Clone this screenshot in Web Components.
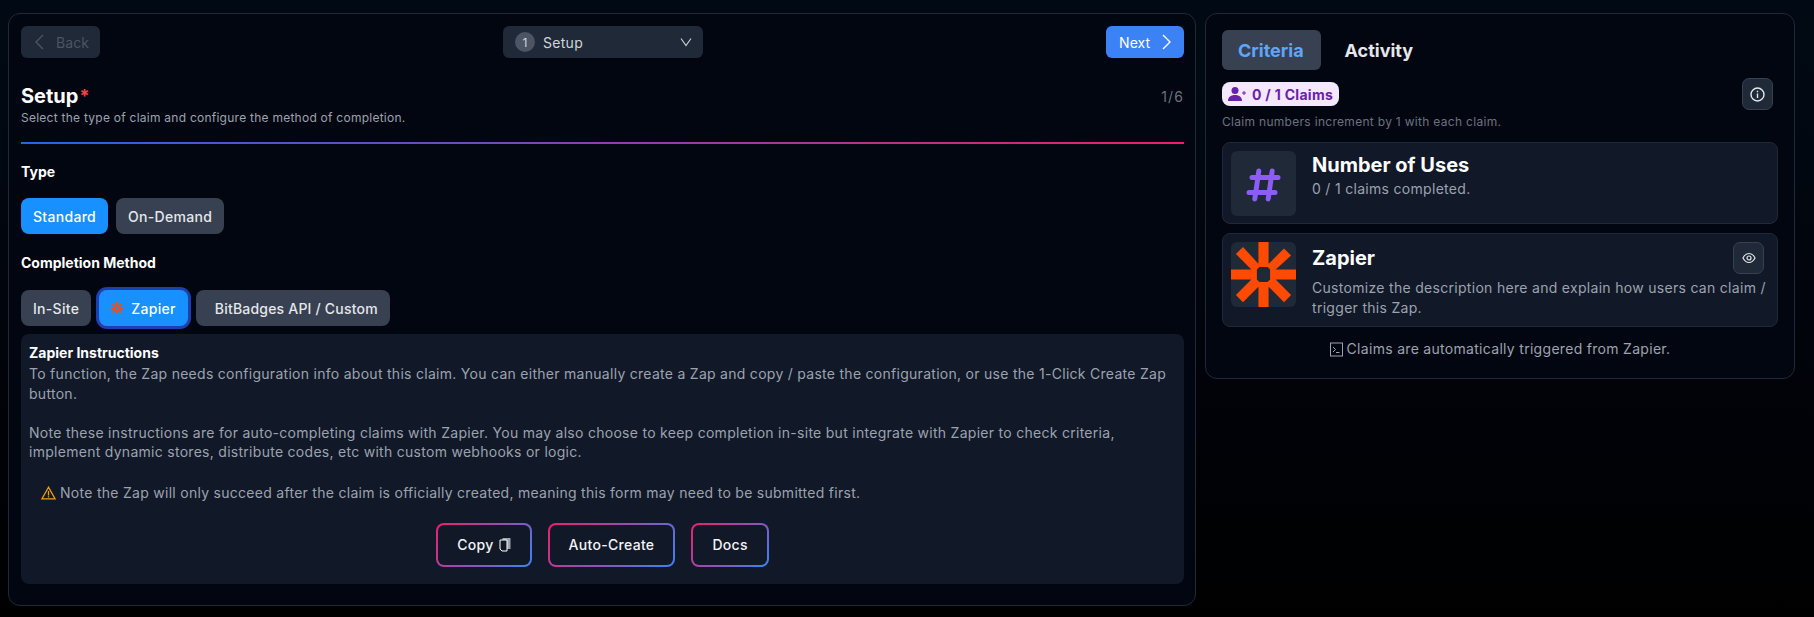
<!DOCTYPE html>
<html>
<head>
<meta charset="utf-8">
<title>Claim setup</title>
<style>
  html, body { margin: 0; height: 100%; }
  body {
    background: linear-gradient(180deg, #010a14 0%, #01040c 50%, #000000 100%);
    font-family: Inter, "Liberation Sans", sans-serif;
    color: #fff;
    overflow: hidden;
  }
</style>
</head>
<body>
<claim-page>
  <setup-panel></setup-panel>
  <criteria-panel></criteria-panel>
</claim-page>

<script>
const ICONS = {
  left: '<svg width="12" height="18" viewBox="0 0 12 18" fill="none" stroke="currentColor" stroke-width="1.4"><path d="M10 2 3 9l7 7"/></svg>',
  right: '<svg width="12" height="18" viewBox="0 0 12 18" fill="none" stroke="currentColor" stroke-width="1.4"><path d="M2 2l7 7-7 7"/></svg>',
  down: '<svg width="12" height="10" viewBox="0 0 12 10" fill="none" stroke="currentColor" stroke-width="1.1"><path d="M1 1.5l5 7 5-7"/></svg>',
  zapier: '<svg style="display:block" viewBox="0 0 64 64" width="100%" height="100%" fill="#ff4a00"><path fill-rule="evenodd" d="M27 0h10v21.500l15.200-15.200 7 7L44 27h20v10H44l15.200 15.200-7 7L37 44v20H27V44L11.800 59.200l-7-7L20 37H0V27h20L4.800 11.800l7-7L27 21.500zM25.500 27v10l2.500 2.500h8l2.500-2.500V27L36 24.500h-8z"/></svg>'
};

class ClaimPage extends HTMLElement {
  constructor() {
    super();
    this.attachShadow({ mode: 'open' });
    this.shadowRoot.innerHTML = `
      <style>
        :host {
          display: grid;
          grid-template-columns: 1188px 590px;
          gap: 9px;
          align-items: start;
          padding: 13px 0 0 8px;
        }
      </style>
      <slot></slot>`;
  }
}

class PillButton extends HTMLElement {
  constructor() {
    super();
    this.attachShadow({ mode: 'open' });
    this.shadowRoot.innerHTML = `
      <style>
        :host {
          display: inline-flex;
          align-items: center;
          justify-content: center;
          box-sizing: border-box;
          height: 36px;
          padding: 0 12px;
          border-radius: 8px;
          background: #374151;
          color: #e5e7eb;
          font-size: 14px;
          font-weight: 500;
          letter-spacing: .3px;
          white-space: nowrap;
        }
        :host([active]) { background: #1890ff; color: #fff; }
        :host([ring]) { box-shadow: 0 0 0 3px #1e40af; }
      </style>
      <slot></slot>`;
  }
}

class GradientButton extends HTMLElement {
  constructor() {
    super();
    this.attachShadow({ mode: 'open' });
    this.shadowRoot.innerHTML = `
      <style>
        :host {
          display: inline-flex;
          align-items: center;
          justify-content: center;
          gap: 5px;
          box-sizing: border-box;
          height: 44px;
          padding: 0 19px;
          border: 2px solid transparent;
          border-radius: 8px;
          background: linear-gradient(#111827, #111827) padding-box,
            linear-gradient(135deg, #ec1f6c 0%, #3b82f6 100%) border-box;
          color: #f3f4f6;
          font-size: 14px;
          font-weight: 500;
          letter-spacing: .3px;
        }
      </style>
      <slot></slot>`;
  }
}

class SetupPanel extends HTMLElement {
  constructor() {
    super();
    this.attachShadow({ mode: 'open' });
    this.shadowRoot.innerHTML = `
      <style>
        :host {
          display: block;
          box-sizing: border-box;
          height: 593px;
          padding: 12px 11px 0 12px;
          border: 1px solid #1f2937;
          border-radius: 12px;
          background: #020611;
        }
        .nav {
          display: flex;
          justify-content: space-between;
          align-items: center;
          height: 32px;
          font-size: 14px;
          letter-spacing: .3px;
        }
        .nav-btn {
          display: flex;
          align-items: center;
          box-sizing: border-box;
          height: 32px;
          border-radius: 6px;
        }
        .back { width: 79px; padding-left: 12px; gap: 11px; background: #1f2937; color: #4b5563; letter-spacing: .1px; }
        .next { width: 78px; padding-left: 13px; gap: 11px; background: #3b82f6; color: #fff; letter-spacing: .1px; }
        .step {
          width: 200px;
          padding: 0 12px;
          gap: 8px;
          background: #1f2937;
          color: #d1d5db;
        }
        .num {
          width: 20px;
          height: 20px;
          border-radius: 50%;
          background: #4b5563;
          display: flex;
          align-items: center;
          justify-content: center;
          font-size: 12px;
        }
        .step svg { margin-left: auto; margin-right: -1px; }
        .head {
          display: flex;
          justify-content: space-between;
          margin-top: 25px;
          height: 26px;
          align-items: center;
        }
        h2 { margin: 0; font-size: 20px; font-weight: 700; line-height: 26px; }
        h2 span { color: #ef4444; font-size: 18px; margin-left: 1px; vertical-align: 1px; }
        .count { font-size: 14px; letter-spacing: 1.1px; color: #6b7280; }
        .sub { margin: 0; font-size: 12px; line-height: 18px; letter-spacing: .25px; color: #9ca3af; }
        .rule {
          height: 2px;
          margin-top: 15px;
          background: linear-gradient(90deg, #2563eb, #ec1f6c);
        }
        .label { margin: 19px 0 0; font-size: 14px; line-height: 18px; font-weight: 700; }
        .row { display: flex; gap: 8px; margin-top: 17px; }
        .label.second { margin-top: 20px; }
        .row.second { margin-top: 18px; }
        .row .wide { padding-left: 19px; letter-spacing: .2px; }
        .zap { display: block; width: 12px; height: 12px; margin-right: 8px; }
        .inst {
          margin-top: 8px;
          height: 250px;
          box-sizing: border-box;
          padding: 9px 8px;
          border-radius: 8px;
          background: #111827;
        }
        .inst h3 { margin: 0 0 1px; font-size: 14px; line-height: 20px; font-weight: 700; }
        .inst p {
          margin: 0;
          font-size: 14px;
          line-height: 19.6px;
          letter-spacing: .28px;
          color: #9ca3af;
        }
        .note {
          display: flex;
          align-items: center;
          gap: 4px;
          margin: 21px 0 0 12px;
          font-size: 14px;
          line-height: 20px;
          letter-spacing: .28px;
          color: #9ca3af;
        }
        .actions { display: flex; justify-content: center; gap: 16px; margin-top: 20px; }
      </style>
      <div class="nav">
        <div class="nav-btn back">${ICONS.left}<span>Back</span></div>
        <div class="nav-btn step"><span class="num">1</span><span>Setup</span>${ICONS.down}</div>
        <div class="nav-btn next"><span>Next</span>${ICONS.right}</div>
      </div>
      <div class="head"><h2>Setup<span>*</span></h2><span class="count">1/6</span></div>
      <p class="sub">Select the type of claim and configure the method of completion.</p>
      <div class="rule"></div>
      <div class="label">Type</div>
      <div class="row">
        <pill-button active>Standard</pill-button>
        <pill-button>On-Demand</pill-button>
      </div>
      <div class="label second">Completion Method</div>
      <div class="row second">
        <pill-button>In-Site</pill-button>
        <pill-button active ring><span class="zap">${ICONS.zapier}</span>Zapier</pill-button>
        <pill-button class="wide">BitBadges API / Custom</pill-button>
      </div>
      <div class="inst">
        <h3>Zapier Instructions</h3>
        <p>To function, the Zap needs configuration info about this claim. You can either manually create a Zap and copy / paste the configuration, or use the 1-Click Create Zap button.</p>
        <p><br>Note these instructions are for auto-completing claims with Zapier. You may also choose to keep completion in-site but integrate with Zapier to check criteria, implement dynamic stores, distribute codes, etc with custom webhooks or logic.</p>
        <div class="note">
          <svg width="15" height="14" viewBox="0 0 15 14" fill="none" stroke="#f59e0b" stroke-width="1.3"><path d="M7.500 1.200 1 12.800h13zM7.500 5v4.500M7.500 10.300v1.200"/></svg>
          <span>Note the Zap will only succeed after the claim is officially created, meaning this form may need to be submitted first.</span>
        </div>
        <div class="actions">
          <gradient-button>Copy <svg width="12" height="15" viewBox="0 0 12 15"><path d="M3.500 1h8v11h-8z" fill="#9ca3af"/><path d="M1 3h7v11H3l-2-2z" stroke="#fff" fill="#111827"/></svg></gradient-button>
          <gradient-button>Auto-Create</gradient-button>
          <gradient-button>Docs</gradient-button>
        </div>
      </div>`;
  }
}

class CriterionCard extends HTMLElement {
  constructor() {
    super();
    this.attachShadow({ mode: 'open' });
    this.shadowRoot.innerHTML = `
      <style>
        :host {
          display: flex;
          gap: 16px;
          box-sizing: border-box;
          padding: 8px;
          border: 1px solid #1f2937;
          border-radius: 8px;
          background: #111827;
        }
        .icon {
          flex: none;
          width: 65px;
          height: 65px;
          border-radius: 6px;
          background: #1f2937;
          display: flex;
          align-items: center;
          justify-content: center;
        }
        .body { flex: 1; min-width: 0; }
        .head { display: flex; align-items: center; justify-content: space-between; }
        .title { font-size: 20px; line-height: 28px; font-weight: 700; }
        .desc {
          margin-top: var(--desc-gap, 0);
          font-size: 14px;
          line-height: 20px;
          letter-spacing: .3px;
          color: #9ca3af;
        }
      </style>
      <div class="icon"><slot name="icon"></slot></div>
      <div class="body">
        <div class="head">
          <div class="title"><slot name="title"></slot></div>
          <slot name="action"></slot>
        </div>
        <div class="desc"><slot></slot></div>
      </div>`;
  }
}

class IconButton extends HTMLElement {
  constructor() {
    super();
    this.attachShadow({ mode: 'open' });
    this.shadowRoot.innerHTML = `
      <style>
        :host {
          flex: none;
          display: flex;
          align-items: center;
          justify-content: center;
          box-sizing: border-box;
          width: 31px;
          height: 32px;
          border: 1px solid #374151;
          border-radius: 7px;
          background: #1f2937;
          color: #e5e7eb;
        }
      </style>
      <slot></slot>`;
  }
}

class CriteriaPanel extends HTMLElement {
  constructor() {
    super();
    this.attachShadow({ mode: 'open' });
    this.shadowRoot.innerHTML = `
      <style>
        :host {
          display: block;
          box-sizing: border-box;
          height: 366px;
          padding: 16px 16px 0;
          border: 1px solid #1f2937;
          border-radius: 12px;
          background: #020611;
        }
        .tabs { display: flex; gap: 24px; font-size: 18px; font-weight: 700; align-items: center; }
        .tab { padding: 0 17px 0 16px; height: 40px; display: flex; align-items: center; border-radius: 6px; }
        .tab.on { background: #374151; color: #60a5fa; }
        .tab.off { padding: 0; color: #e5e7eb; }
        .top {
          display: flex;
          justify-content: space-between;
          align-items: center;
          margin-top: 8px;
          padding-right: 5px;
        }
        .chip {
          display: flex;
          align-items: center;
          gap: 6px;
          height: 24px;
          padding: 0 6px;
          border-radius: 8px;
          background: #f3e8ff;
          color: #6b21a8;
          font-size: 14px;
          font-weight: 700;
          letter-spacing: .3px;
        }
        .hint { margin: 3px 0 0; font-size: 12px; line-height: 18px; letter-spacing: .3px; color: #6b7280; }
        .cards { display: flex; flex-direction: column; gap: 9px; margin-top: 11px; }
        criterion-card:first-child { height: 82px; }
        criterion-card:last-child { height: 94px; --desc-gap: 4px; }
        .foot {
          display: flex;
          align-items: center;
          justify-content: center;
          gap: 4px;
          margin-top: 12px;
          font-size: 14px;
          line-height: 20px;
          letter-spacing: .3px;
          color: #9ca3af;
        }
      </style>
      <div class="tabs"><div class="tab on">Criteria</div><div class="tab off">Activity</div></div>
      <div class="top">
        <div class="chip">
          <svg width="18" height="14" viewBox="0 0 18 14" fill="#6b21a8"><circle cx="7" cy="3.500" r="3.500"/><path d="M0 14c0-4 3-6 7-6s7 2 7 6zM14 5.500h1.500V4h1v1.500H18v1h-1.500V8h-1V6.500H14z"/></svg>
          <span>0 / 1 Claims</span>
        </div>
        <icon-button>
          <svg width="15" height="15" viewBox="0 0 15 15" fill="none" stroke="currentColor" stroke-width="1.4"><circle cx="7.500" cy="7.500" r="6.500"/><path d="M7.500 6.500v4.500M7.500 3.800v1.400"/></svg>
        </icon-button>
      </div>
      <p class="hint">Claim numbers increment by 1 with each claim.</p>
      <div class="cards">
        <criterion-card>
          <svg slot="icon" width="38" height="38" viewBox="0 0 38 38" fill="none" stroke="#8b5cf6" stroke-width="5" stroke-linecap="round"><path d="M13.800 6 9.800 34M27.200 6 23.200 34M7 12.500h26M4 27.500h26"/></svg>
          <span slot="title">Number of Uses</span>
          0 / 1 claims completed.
        </criterion-card>
        <criterion-card>
          <span slot="icon" style="width:65px;height:65px">${ICONS.zapier}</span>
          <span slot="title">Zapier</span>
          Customize the description here and explain how users can claim / trigger this Zap.
          <icon-button slot="action" style="margin-right:5px">
            <svg width="14" height="12" viewBox="0 0 14 12" fill="none" stroke="currentColor" stroke-width="1.200"><path d="M1 6c1.500-3 3.500-4.500 6-4.500S11.500 3 13 6c-1.500 3-3.500 4.500-6 4.500S2.500 9 1 6z"/><circle cx="7" cy="6" r="2"/></svg>
          </icon-button>
        </criterion-card>
      </div>
      <div class="foot">
        <svg width="13" height="15" viewBox="0 0 13 15" fill="none" stroke="#9ca3af" stroke-width="1"><rect x=".5" y="1" width="12" height="13"/><path d="M3 5l2.500 2.500L3 10M6 10.500h3.500"/></svg>
        <span>Claims are automatically triggered from Zapier.</span>
      </div>`;
  }
}

customElements.define('claim-page', ClaimPage);
customElements.define('pill-button', PillButton);
customElements.define('gradient-button', GradientButton);
customElements.define('setup-panel', SetupPanel);
customElements.define('criterion-card', CriterionCard);
customElements.define('icon-button', IconButton);
customElements.define('criteria-panel', CriteriaPanel);
</script>
</body>
</html>
